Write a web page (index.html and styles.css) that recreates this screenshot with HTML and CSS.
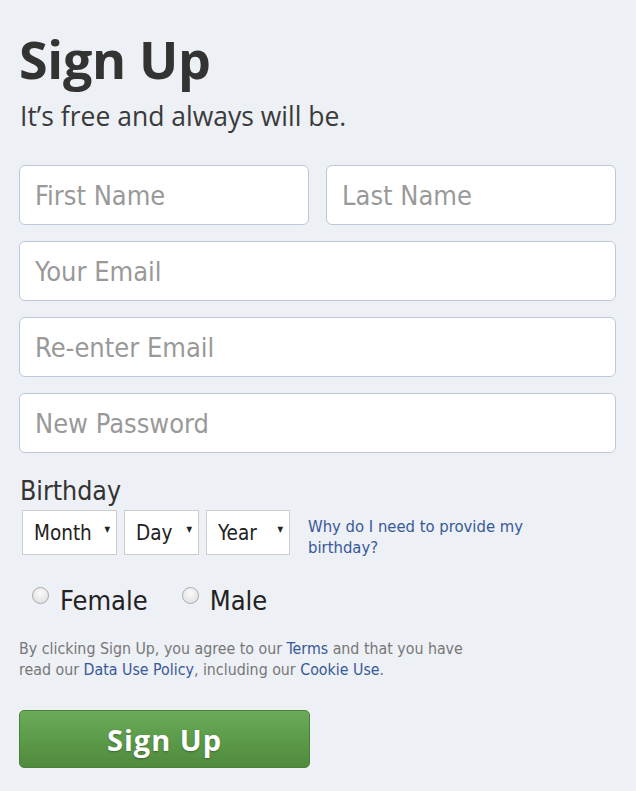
FILE: index.html
```html
<!DOCTYPE html>
<html>
<head>
<meta charset="utf-8">
<link rel="stylesheet" href="styles.css">
</head>
<body>
<div class="page">
  <h1 class="title">Sign Up</h1>
  <p class="subtitle">It’s free and always will be.</p>
  <form class="form">
    <div class="row two">
      <input class="field" type="text" placeholder="First Name">
      <input class="field" type="text" placeholder="Last Name">
    </div>
    <div class="row"><input class="field" type="text" placeholder="Your Email"></div>
    <div class="row"><input class="field" type="text" placeholder="Re-enter Email"></div>
    <div class="row"><input class="field" type="password" placeholder="New Password"></div>
    <div class="bday-label">Birthday</div>
    <div class="bday">
      <div class="sel month"><span>Month</span><span class="caret">▼</span></div>
      <div class="sel day"><span>Day</span><span class="caret">▼</span></div>
      <div class="sel year"><span>Year</span><span class="caret">▼</span></div>
      <a class="why" href="#">Why do I need to provide my birthday?</a>
    </div>
    <div class="gender">
      <label class="opt"><span class="radio"></span>Female</label>
      <label class="opt"><span class="radio"></span>Male</label>
    </div>
    <p class="terms"><span class="line">By clicking Sign Up, you agree to our <a href="#">Terms</a> and that you have</span><span class="line">read our <a href="#">Data Use Policy</a>, including our <a href="#">Cookie Use</a>.</span></p>
    <button class="btn" type="button">Sign Up</button>
  </form>
</div>
</body>
</html>
```
FILE: styles.css
```css
html, body {
  margin: 0;
  padding: 0;
  background: #edf0f5;
}
.page {
  padding: 26px 20px 0 19px;
  font-family: "DejaVu Sans Condensed", "DejaVu Sans", sans-serif;
}
.title {
  margin: 0;
  font-family: "Open Sans", Lato, sans-serif;
  font-weight: 700;
  font-size: 52px;
  line-height: 66px;
  color: #333;
  letter-spacing: -0.3px;
}
.subtitle {
  margin: 6px 0 0 1px;
  font-family: "Open Sans", Lato, sans-serif;
  font-size: 26.5px;
  line-height: 36px;
  color: #3a3a3a;
}
.form {
  margin-top: 31px;
  display: flex;
  flex-direction: column;
}
.row {
  display: flex;
  gap: 17px;
  margin-bottom: 16px;
}
.field {
  flex: 1;
  min-width: 0;
  box-sizing: border-box;
  height: 60px;
  border: 1px solid #bdc7d8;
  border-radius: 6px;
  background: #fff;
  padding: 0 15px;
  font-family: "DejaVu Sans Condensed", "DejaVu Sans", sans-serif;
  font-size: 27px;
  color: #333;
  outline: none;
}
.field::placeholder {
  color: #999;
}
.bday-label {
  margin-top: 6px;
  font-size: 26.5px;
  line-height: 32px;
  color: #333;
  margin-left: 1px;
}
.bday {
  display: flex;
  gap: 7px;
  margin-top: 3px;
  margin-left: 3px;
  align-items: flex-start;
}
.sel {
  box-sizing: border-box;
  height: 45px;
  border: 1px solid #ccc;
  background: #fff;
  display: flex;
  align-items: center;
  justify-content: space-between;
  padding: 0 6px 0 11px;
  font-size: 20.5px;
  color: #222;
}
.month { width: 95px; }
.day { width: 75px; }
.year { width: 84px; }
.caret {
  font-size: 8px;
  margin-top: -6px;
}
.why {
  margin-left: 11px;
  margin-top: 6px;
  width: 230px;
  font-size: 16.5px;
  line-height: 21px;
  color: #385898;
  text-decoration: none;
}
.gender {
  display: flex;
  gap: 34px;
  margin-top: 27px;
  margin-left: 13px;
}
.opt {
  display: flex;
  align-items: center;
  font-size: 27px;
  color: #222;
}
.radio {
  box-sizing: border-box;
  width: 17px;
  height: 17px;
  border-radius: 50%;
  border: 1px solid #a9a9a9;
  background: radial-gradient(circle at 50% 35%, #fafafa, #dcdcdc);
  margin-right: 11px;
  margin-top: -10px;
}
.terms {
  margin: 22px 0 0 0;
  font-size: 15.8px;
  line-height: 21px;
  color: #777;
}
.terms .line {
  display: block;
  white-space: nowrap;
}
.terms a {
  color: #385898;
  text-decoration: none;
}
.btn {
  margin-top: 30px;
  width: 291px;
  height: 58px;
  border: 1px solid #4a7f3a;
  border-radius: 5px;
  background: linear-gradient(#6aab58, #4f8b3d);
  color: #fff;
  font-family: "Open Sans", Lato, sans-serif;
  font-weight: 700;
  font-size: 29px;
  letter-spacing: 1px;
  text-shadow: 0 1px 2px rgba(0,0,0,0.3);
  cursor: pointer;
}
```
